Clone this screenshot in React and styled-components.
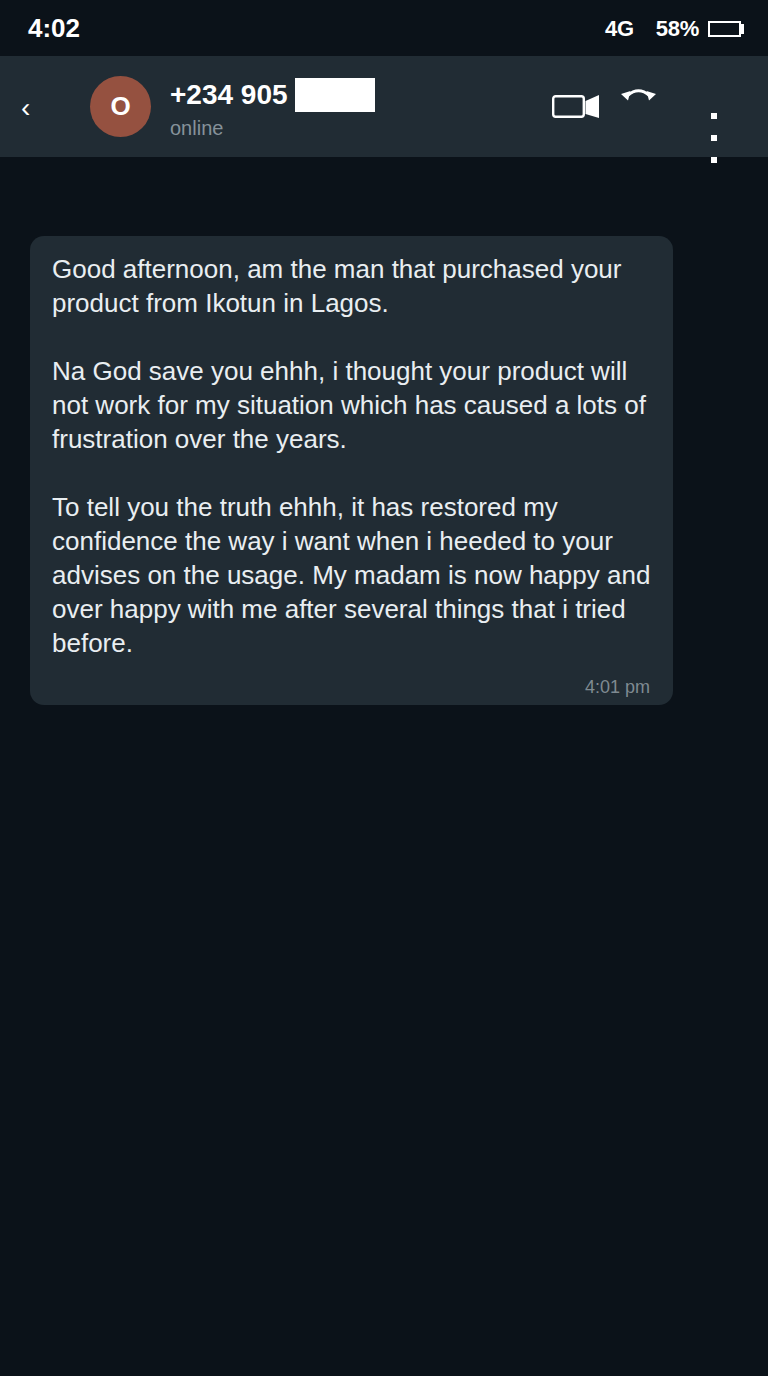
import React from "react";
import styled, { createGlobalStyle } from "styled-components";

const GlobalStyle = createGlobalStyle`
    html, body {
        margin: 0;
        padding: 0;
        background-color: #0b1219;
    }
`;

function VideoIcon() {
    return (
        <svg width="48" height="26" viewBox="0 0 48 26">
            <rect x="1.2" y="2.2" width="30.6" height="20.6" rx="2.5" fill="none" stroke="#fff" strokeWidth="2.4" />
            <path d="M33.5 7 L47 1 V24 L33.5 20 Z" fill="#fff" />
        </svg>
    );
}

function CallEndIcon() {
    return (
        <svg width="36" height="14" viewBox="0 0 36 14">
            <path d="M6.5 8.5 Q17.5 -1 28.5 8.5" fill="none" stroke="#fff" strokeWidth="3" />
            <path d="M0 7 L9.5 4 L7 13.5 Z M35 7 L25.5 4 L28 13.5 Z" fill="#fff" />
        </svg>
    );
}

function App() {
    return (
        <Page>
            <GlobalStyle />
            <StatusBar>
                <Clock>4:02</Clock>
                <StatusRight>
                    <Network>4G</Network>
                    <Percent>58%</Percent>
                    <Battery>
                        <BatteryTip />
                    </Battery>
                </StatusRight>
            </StatusBar>
            <Header>
                <Back>‹</Back>
                <Avatar>O</Avatar>
                <Contact>
                    <NameRow>
                        <Name>+234 905</Name>
                        <Redaction />
                    </NameRow>
                    <Presence>online</Presence>
                </Contact>
                <Actions>
                    <VideoSlot>
                        <VideoIcon />
                    </VideoSlot>
                    <CallSlot>
                        <CallEndIcon />
                    </CallSlot>
                    <Kebab>
                        <Dot />
                        <Dot />
                        <Dot />
                    </Kebab>
                </Actions>
            </Header>
            <Chat>
                <Bubble>
                    <Message>
                        Good afternoon, am the man that purchased your{"\n"}
                        product from Ikotun in Lagos.{"\n\n"}
                        Na God save you ehhh, i thought your product will{"\n"}
                        not work for my situation which has caused a lots of{"\n"}
                        frustration over the years.{"\n\n"}
                        To tell you the truth ehhh, it has restored my{"\n"}
                        confidence the way i want when i heeded to your{"\n"}
                        advises on the usage. My madam is now happy and{"\n"}
                        over happy with me after several things that i tried{"\n"}
                        before.
                    </Message>
                    <Time>4:01 pm</Time>
                </Bubble>
            </Chat>
        </Page>
    );
}

const Page = styled.div`
    width: 768px;
    height: 1376px;
    overflow: hidden;
    background-color: #0b1219;
    color: #fff;
    font-family: "Liberation Sans", Arial, sans-serif;
`;

const StatusBar = styled.div`
    height: 56px;
    box-sizing: border-box;
    padding: 1px 24px 0 28px;
    display: flex;
    align-items: center;
    justify-content: space-between;
`;

const Clock = styled.span`
    font-size: 26px;
    font-weight: 700;
`;

const StatusRight = styled.div`
    display: flex;
    align-items: center;
    font-size: 22px;
    font-weight: 700;
`;

const Network = styled.span`
    margin-right: 22px;
    letter-spacing: -0.3px;
`;

const Percent = styled.span`
    margin-right: 9px;
    letter-spacing: -0.3px;
`;

const Battery = styled.div`
    position: relative;
    width: 29px;
    height: 12px;
    border: 2px solid #fff;
    margin-right: 3px;
    margin-top: 1px;
`;

const BatteryTip = styled.div`
    position: absolute;
    right: -5px;
    top: 1px;
    width: 3px;
    height: 10px;
    background-color: #fff;
`;

const Header = styled.div`
    height: 101px;
    box-sizing: border-box;
    background-color: #212c34;
    display: flex;
    align-items: flex-start;
`;

const Back = styled.span`
    width: 90px;
    box-sizing: border-box;
    padding: 32px 0 0 21px;
    font-size: 28px;
    font-weight: 400;
    line-height: 40px;
`;

const Avatar = styled.div`
    width: 61px;
    height: 61px;
    margin-top: 20px;
    border-radius: 50%;
    background-color: #955140;
    display: flex;
    align-items: center;
    justify-content: center;
    font-size: 26px;
    font-weight: 700;
`;

const Contact = styled.div`
    margin-left: 19px;
    padding-top: 22px;
    width: 382px;
    flex-shrink: 0;
`;

const NameRow = styled.div`
    display: flex;
    align-items: center;
    height: 34px;
`;

const Name = styled.span`
    font-size: 28px;
    font-weight: 700;
`;

const Redaction = styled.div`
    width: 80px;
    height: 34px;
    margin-left: 7px;
    background-color: #fff;
`;

const Presence = styled.div`
    margin-top: 3px;
    font-size: 20px;
    line-height: 26px;
    color: #86929a;
`;

const Actions = styled.div`
    display: flex;
    align-items: flex-start;
`;

const VideoSlot = styled.div`
    padding-top: 38px;
    width: 69px;
`;

const CallSlot = styled.div`
    padding-top: 31px;
    width: 90px;
`;

const Kebab = styled.div`
    padding-top: 57px;
    display: flex;
    flex-direction: column;
    gap: 16px;
    flex-shrink: 0;
`;

const Dot = styled.div`
    width: 6px;
    height: 6px;
    background-color: #fff;
`;

const Chat = styled.div`
    padding: 79px 0 0 30px;
`;

const Bubble = styled.div`
    width: 643px;
    height: 469px;
    box-sizing: border-box;
    padding: 16px 23px 0 22px;
    background-color: #212c34;
    border-radius: 14px;
`;

const Message = styled.div`
    white-space: pre;
    font-size: 26px;
    line-height: 34px;
    color: #e9eef1;
`;

const Time = styled.div`
    margin-top: 15px;
    text-align: right;
    font-size: 18px;
    line-height: 24px;
    color: #7f8a91;
`;

export default App;
